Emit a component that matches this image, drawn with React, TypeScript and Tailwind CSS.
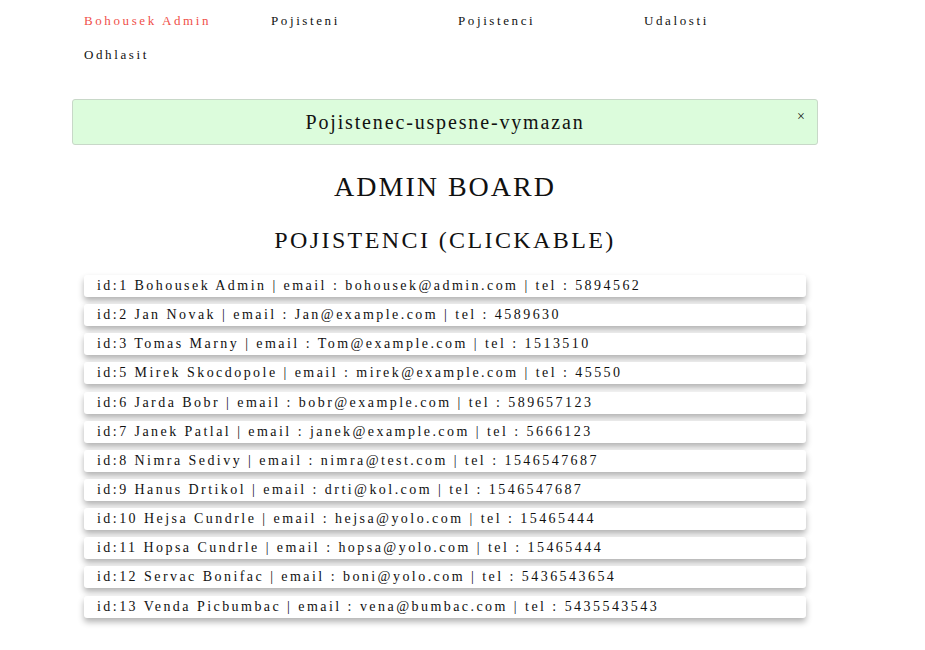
import React from "react";

const people = [
  "id:1 Bohousek Admin | email : bohousek@admin.com | tel : 5894562",
  "id:2 Jan Novak | email : Jan@example.com | tel : 4589630",
  "id:3 Tomas Marny | email : Tom@example.com | tel : 1513510",
  "id:5 Mirek Skocdopole | email : mirek@example.com | tel : 45550",
  "id:6 Jarda Bobr | email : bobr@example.com | tel : 589657123",
  "id:7 Janek Patlal | email : janek@example.com | tel : 5666123",
  "id:8 Nimra Sedivy | email : nimra@test.com | tel : 1546547687",
  "id:9 Hanus Drtikol | email : drti@kol.com | tel : 1546547687",
  "id:10 Hejsa Cundrle | email : hejsa@yolo.com | tel : 15465444",
  "id:11 Hopsa Cundrle | email : hopsa@yolo.com | tel : 15465444",
  "id:12 Servac Bonifac | email : boni@yolo.com | tel : 5436543654",
  "id:13 Venda Picbumbac | email : vena@bumbac.com | tel : 5435543543",
];

export default function App() {
  return (
    <div className="min-h-[650px] bg-white text-[#111] font-['Liberation_Serif',serif]">
      <nav className="ml-[84px] w-[748px] pt-[4px] flex flex-wrap text-[13px] tracking-[2.6px] leading-[34px]">
        <a className="w-[187px] text-[#f0504a]">Bohousek Admin</a>
        <a className="w-[187px]">Pojisteni</a>
        <a className="w-[186px]">Pojistenci</a>
        <a className="w-[187px]">Udalosti</a>
        <a className="w-[187px]">Odhlasit</a>
      </nav>
      <div className="ml-[72px] w-[746px] mt-[27px]">
        <div className="relative h-[46px] border border-[#c8d8c8] rounded-[3px] bg-[#dcfcdc] flex items-center justify-center text-[20px] tracking-[1.85px]">
          Pojistenec-uspesne-vymazan
          <span className="absolute right-[12px] top-[6px] text-[14px] tracking-normal">×</span>
        </div>
        <h1 className="text-center text-[28px] tracking-[2px] mt-[24px] leading-[36px]">ADMIN BOARD</h1>
        <h2 className="text-center text-[24px] tracking-[2.4px] mt-[19px] leading-[32px]">POJISTENCI (CLICKABLE)</h2>
        <ul className="mx-[12px] mt-[19px] flex flex-col gap-[7.15px]">
          {people.map((p) => (
            <li
              key={p}
              className="h-[22px] rounded-[3px] bg-white pl-[13px] text-[14px] tracking-[2.45px] leading-[21px] shadow-[0_4px_6px_rgba(0,0,0,0.3)] whitespace-nowrap"
            >
              {p}
            </li>
          ))}
        </ul>
      </div>
    </div>
  );
}
